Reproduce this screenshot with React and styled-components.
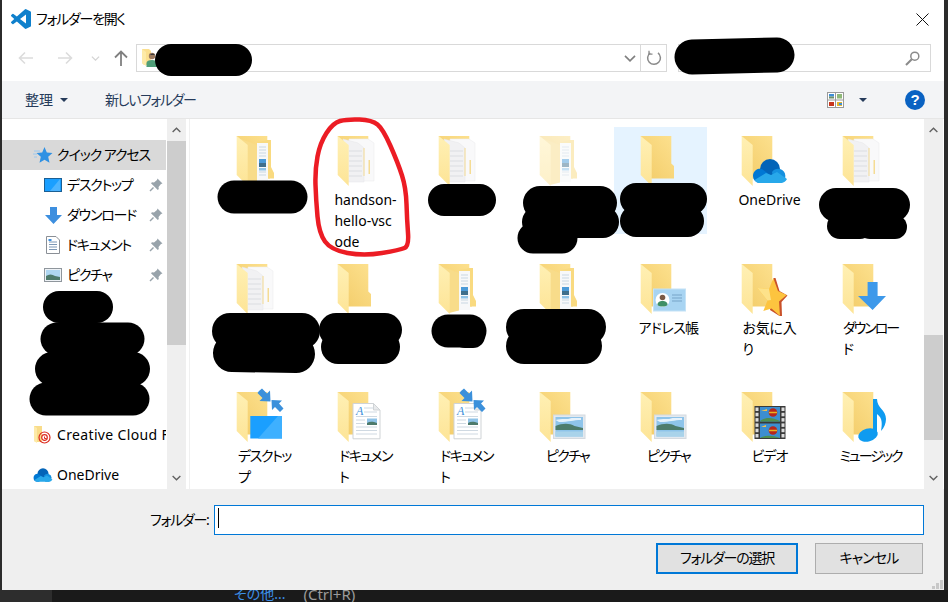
import React, { useId } from "react";
import styled, { createGlobalStyle } from "styled-components";

const Global = createGlobalStyle`
  html, body { margin: 0; padding: 0; background: #1a1a1a; overflow: hidden; }
  * { box-sizing: border-box; }
`;

const FONT = `"Noto Sans", "Noto Sans CJK JP", sans-serif`;

const Screen = styled.div`
  position: relative;
  width: 948px;
  height: 602px;
  display: flex;
  flex-direction: column;
  overflow: hidden;
  font-family: ${FONT};
  font-feature-settings: "palt";
  font-size: 14px;
  color: #000;
  background: #1a1a1a;
`;
const WindowRow = styled.div`
  display: flex;
  height: 590px;
  flex: none;
`;
const Edge = styled.div`
  flex: none;
  width: ${(p) => p.$w}px;
  background: #2b2b2b;
`;
const Dialog = styled.div`
  flex: 1;
  min-width: 0;
  display: flex;
  flex-direction: column;
  background: #fff;
`;
const TitleBar = styled.div`
  height: 38px;
  flex: none;
  display: flex;
  align-items: center;
  padding: 0 15px 0 9px;
  gap: 5px;
`;
const TitleText = styled.span`
  flex: 1;
  font-size: 14px;
  line-height: 20px;
  letter-spacing: -1.25px;
`;
const NavBar = styled.div`
  height: 43px;
  flex: none;
  display: flex;
  padding: 6px 13px 9px 0;
`;
const NavButtons = styled.div`
  width: 134px;
  flex: none;
  display: flex;
  align-items: center;
  padding-left: 16px;
`;
const AddressBox = styled.div`
  width: 531px;
  flex: none;
  display: flex;
  align-items: center;
  border: 1px solid #d9d9d9;
  padding-left: 5px;
`;
const AddressFill = styled.div`
  flex: 1;
`;
const AddressDivider = styled.div`
  width: 1px;
  height: 100%;
  background: #d9d9d9;
  margin: 0 5px 0 4px;
`;
const SearchBox = styled.div`
  flex: 1;
  margin-left: 11px;
  display: flex;
  align-items: center;
  justify-content: flex-end;
  border: 1px solid #d9d9d9;
  padding-right: 10px;
`;
const ToolBar = styled.div`
  height: 38px;
  flex: none;
  display: flex;
  align-items: center;
  background: #f3f4f6;
  border-bottom: 1px solid #e6e6e6;
  color: #263b5a;
  padding: 0 19px 0 23px;
`;
const ToolLabel = styled.span`
  font-size: 14px;
  line-height: 20px;
  letter-spacing: ${(p) => p.$spacing || 0}px;
`;
const ToolCaret = styled.span`
  width: 0;
  height: 0;
  margin-left: ${(p) => p.$ml}px;
  border-left: 4px solid transparent;
  border-right: 4px solid transparent;
  border-top: 4px solid #263b5a;
`;
const ToolSpacer = styled.div`
  flex: none;
  width: ${(p) => p.$w}px;
`;
const ToolFill = styled.div`
  flex: 1;
`;
const HelpBadge = styled.span`
  width: 20px;
  height: 20px;
  margin-left: 38px;
  border-radius: 50%;
  background: #0a62c2;
  color: #fff;
  font-family: "Liberation Sans", sans-serif;
  font-weight: 700;
  font-size: 15px;
  line-height: 20px;
  text-align: center;
`;
const Main = styled.div`
  height: 370px;
  flex: none;
  display: flex;
  overflow: hidden;
`;
const Sidebar = styled.div`
  width: 164px;
  flex: none;
  padding-top: 21px;
  margin-right: 1px;
  overflow: hidden;
`;
const NavRow = styled.div`
  height: 30px;
  display: flex;
  align-items: center;
  margin-bottom: ${(p) => p.$after || 0}px;
  padding-left: ${(p) => (p.$level ? 41 : 31)}px;
  padding-right: 3px;
  background: ${(p) => (p.$active ? "#d9d9d9" : "transparent")};
  white-space: nowrap;
`;
const NavIcon = styled.span`
  flex: none;
  width: 20px;
  height: 20px;
  margin-right: 4px;
  display: flex;
  align-items: center;
  justify-content: center;
`;
const NavLabel = styled.span`
  font-size: 14px;
  line-height: 20px;
  letter-spacing: ${(p) => p.$spacing}px;
`;
const Pin = styled.span`
  margin-left: auto;
  flex: none;
  display: flex;
`;
const ScrollBar = styled.div`
  width: 19px;
  flex: none;
  display: flex;
  flex-direction: column;
  background: #efefef;
`;
const ScrollButton = styled.div`
  height: 22px;
  flex: none;
  display: flex;
  align-items: center;
  justify-content: center;
`;
const ScrollSpace = styled.div`
  flex: ${(p) => (p.$fill ? 1 : "none")};
  height: ${(p) => (p.$fill ? "auto" : `${p.$h}px`)};
  background: ${(p) => (p.$thumb ? "#cdcdcd" : "transparent")};
`;
const Divider = styled.div`
  width: 4px;
  flex: none;
  border-right: 1px solid #f0f0f0;
`;
const Files = styled.div`
  flex: 1;
  min-width: 0;
  overflow: hidden;
  padding: 8px 0 0 20px;
  display: grid;
  grid-template-columns: repeat(7, 93px);
  grid-auto-rows: 128px;
  column-gap: 8px;
  align-items: start;
`;
const Tile = styled.div`
  display: flex;
  flex-direction: column;
  align-items: stretch;
  padding-top: 9px;
  height: ${(p) => (p.$selected ? "107px" : "125px")};
  background: ${(p) => (p.$selected ? "#e5f3ff" : "transparent")};
`;
const TileIcon = styled.svg`
  display: block;
  flex: none;
  width: 60px;
  height: 50px;
  margin-left: 26px;
  overflow: visible;
`;
const TileLabel = styled.div`
  align-self: center;
  margin: 3px 0 0 16px;
  font-size: 14px;
  line-height: 21px;
  white-space: pre;
  letter-spacing: ${(p) => p.$spacing || 0}px;
`;
const Footer = styled.div`
  position: relative;
  flex: 1;
  background: #efefef;
  padding: 16px 20px 0 148px;
  display: flex;
  flex-direction: column;
`;
const FieldRow = styled.div`
  display: flex;
  align-items: center;
`;
const FieldLabel = styled.label`
  font-size: 14px;
  line-height: 20px;
  margin-right: 5px;
  white-space: nowrap;
  letter-spacing: -1.25px;
`;
const Field = styled.div`
  flex: 1;
  height: 30px;
  border: 1px solid #0078d7;
  background: #fff;
  padding: 2px 3px;
`;
const Cursor = styled.div`
  width: 1px;
  height: 20px;
  background: #000;
`;
const ButtonRow = styled.div`
  display: flex;
  justify-content: flex-end;
  gap: 17px;
  margin-top: 8px;
  padding-right: 1px;
`;
const Button = styled.button`
  height: 31px;
  width: ${(p) => p.$w}px;
  padding: 0 0 3px;
  background: #e1e1e1;
  border: ${(p) => (p.$primary ? "2px solid #0078d7" : "1px solid #adadad")};
  font-family: ${FONT};
  font-feature-settings: "palt";
  font-size: 14px;
  letter-spacing: ${(p) => p.$spacing}px;
  color: #000;
`;
const Grip = styled.svg`
  position: absolute;
  right: 1px;
  bottom: 1px;
`;
const BottomBar = styled.div`
  height: 12px;
  flex: none;
  display: flex;
  overflow: hidden;
  background: #1a1a1a;
`;
const BottomLeft = styled.div`
  width: 52px;
  flex: none;
  background: #2d2d2d;
`;
const BottomText = styled.span`
  margin-top: -6px;
  font-size: ${(p) => p.$size}px;
  line-height: 20px;
  white-space: nowrap;
  margin-left: ${(p) => p.$ml}px;
  color: ${(p) => p.$color};
`;
const Overlay = styled.svg`
  position: absolute;
  left: 0;
  top: 0;
  width: 948px;
  height: 602px;
  pointer-events: none;
`;

/* ---------- marks drawn over the screenshot ---------- */
const BLOBS = [
  [171, 60, 236, 60, 32],
  [692, 57, 777, 55, 35],
  [59, 307, 97, 307, 32],
  [57, 339, 128, 339, 33],
  [52, 369, 133, 369, 34],
  [46, 399, 133, 399, 33],
  [234, 197, 291, 197, 33],
  [444, 200, 480, 200, 32],
  [540, 203, 600, 203, 34],
  [538, 222, 603, 222, 32],
  [533, 238, 562, 238, 31],
  [636, 199, 691, 199, 32],
  [636, 221, 688, 221, 32],
  [836, 205, 893, 205, 34],
  [840, 226, 860, 226, 26],
  [870, 227, 895, 227, 24],
  [230, 331, 302, 331, 36],
  [232, 353, 296, 354, 38],
  [336, 330, 385, 330, 34],
  [338, 347, 383, 347, 34],
  [448, 331, 470, 331, 33],
  [465, 336, 473, 336, 24],
  [524, 327, 588, 327, 36],
  [524, 346, 584, 346, 36],
];
const RING = [
  [347, 119], [372, 120], [383, 129], [398, 163], [406, 188], [407, 220], [409, 246],
  [400, 250], [364, 256], [331, 250], [319, 233], [316, 200], [315, 170], [320, 143],
  [333, 123],
];
const smoothClosed = (pts) => {
  const mid = (a, b) => [(a[0] + b[0]) / 2, (a[1] + b[1]) / 2];
  const start = mid(pts[pts.length - 1], pts[0]);
  let d = `M${start[0]} ${start[1]}`;
  pts.forEach((p, i) => {
    const m = mid(p, pts[(i + 1) % pts.length]);
    d += `Q${p[0]} ${p[1]} ${m[0]} ${m[1]}`;
  });
  return d + "Z";
};

/* ---------- small icons ---------- */
const Arrow = ({ dir, color }) => (
  <svg width="16" height="14" viewBox="0 0 16 14">
    <path
      d={dir === "left" ? "M15 7H1.5M7 1.5 1.5 7 7 12.5" : "M1 7h13.5M9 1.5 14.5 7 9 12.5"}
      fill="none"
      stroke={color}
      strokeWidth="1.6"
    />
  </svg>
);
const NavSlot = styled.span`
  display: flex;
  flex: none;
  margin-left: ${(p) => p.$ml || 0}px;
`;
const Chevron = ({ color, up, w = 10, h = 6, sw = 1.5 }) => (
  <svg width={w} height={h} viewBox="0 0 10 6">
    <path d={up ? "M.7 5.3 5 1l4.3 4.3" : "M.7.7 5 5 9.3.7"} fill="none" stroke={color} strokeWidth={sw} />
  </svg>
);
const VsCode = () => (
  <svg width="20" height="20" viewBox="0 0 24 24">
    <path
      fill="#0f80cc"
      d="M23.15 2.587L18.21.21a1.494 1.494 0 0 0-1.705.29l-9.46 8.63-4.12-3.128a.999.999 0 0 0-1.276.057L.327 7.261A1 1 0 0 0 .326 8.74L3.899 12 .326 15.26a1 1 0 0 0 .001 1.479L1.65 17.94a.999.999 0 0 0 1.276.057l4.12-3.128 9.46 8.63a1.492 1.492 0 0 0 1.704.29l4.942-2.377A1.5 1.5 0 0 0 24 20.06V3.939a1.5 1.5 0 0 0-.85-1.352zm-5.146 14.861L10.826 12l7.178-5.448v10.896z"
    />
  </svg>
);
const CloseX = () => (
  <svg width="13" height="13" viewBox="0 0 13 13">
    <path d="M.5.5l12 12M12.5.5l-12 12" stroke="#111" strokeWidth="1" fill="none" />
  </svg>
);
const UserFolder = () => (
  <svg width="18" height="22" viewBox="0 0 18 22">
    <path d="M0 2h7l2 2v14H2l-2-2z" fill="#fbdf8f" />
    <path d="M0 2l4 3v14l-4-3z" fill="#fdeaa8" />
    <circle cx="10" cy="9" r="3.2" fill="#9c7a5e" />
    <path d="M9 7a3 3 0 0 1 4 1H8z" fill="#3a3a3a" />
    <path d="M4.500 20v-4c0-2 2.500-3 5.500-3s5 1 5 3v4z" fill="#4f9e78" />
  </svg>
);
const Refresh = () => (
  <svg width="16" height="16" viewBox="0 0 16 16">
    <path d="M4.200 2.800A6.400 6.400 0 1 0 12 2.900" fill="none" stroke="#8a8a8a" strokeWidth="1.500" />
    <path d="M3 .7v3.500h3.500" fill="none" stroke="#8a8a8a" strokeWidth="1.300" />
  </svg>
);
const Magnifier = () => (
  <svg width="15" height="15" viewBox="0 0 15 15">
    <circle cx="9.800" cy="5.200" r="4" fill="none" stroke="#8a8a8a" strokeWidth="1.500" />
    <path d="M6.800 8.200 1 14" stroke="#8a8a8a" strokeWidth="2" />
  </svg>
);
const ViewIcon = () => (
  <svg width="17" height="16" viewBox="0 0 17 16">
    <rect x=".5" y=".5" width="16" height="15" fill="#fff" stroke="#9a9a9a" />
    <path d="M8.500 0v16M0 8h17" stroke="#9a9a9a" />
    <rect x="2" y="2" width="5" height="2.500" fill="#3f8ed8" />
    <rect x="2" y="4.500" width="5" height="2" fill="#6f8f6a" />
    <rect x="10" y="2" width="5" height="4.500" fill="#8fb878" />
    <rect x="2" y="10" width="5" height="4" fill="#c8351c" />
    <rect x="10" y="10" width="5" height="4" fill="#e3b52a" />
    <rect x="12" y="11" width="3" height="2" fill="#3f8ed8" />
  </svg>
);
const PinIcon = () => (
  <svg width="14" height="14" viewBox="0 0 14 14">
    <path d="M8.500.5 13.500 5.500 12 6 9.500 9 9.800 11 8.800 12 2 5.200 3 4.200 5 4.500 8 2z" fill="#98a3ab" />
    <path d="M4.500 9.500 1 13" stroke="#98a3ab" strokeWidth="1.400" />
  </svg>
);
const SideStar = () => (
  <svg width="20" height="18" viewBox="0 0 20 18">
    <path d="M11.500 1l2.300 5.500 5.700.5-4.300 3.800 1.300 6-5-3-5 3 1.300-6L3.500 7l5.700-.5z" fill="#2f91e3" />
    <path d="M1 5h6M0 8h4M1 11h3" stroke="#9cc8ee" strokeWidth="1" />
  </svg>
);
const SideDesktop = () => (
  <svg width="18" height="14" viewBox="0 0 18 14">
    <rect x=".5" y=".5" width="17" height="13" fill="#1a9fff" stroke="#1b5f94" />
    <path d="M6 13 16 1v12z" fill="#4cb4ff" />
  </svg>
);
const SideDown = () => (
  <svg width="17" height="17" viewBox="0 0 17 17">
    <path d="M5 0h7v8h5l-8.500 9L0 8h5z" fill="#3d8fdf" />
  </svg>
);
const SideDoc = () => (
  <svg width="14" height="18" viewBox="0 0 14 18">
    <path d="M.5.500H10L13.500 4V17.500H.5z" fill="#fff" stroke="#8a8f96" />
    <path d="M3 6h8M3 8.500h8M3 11h8M3 13.500h8" stroke="#7c97b5" />
    <rect x="2.500" y="3" width="3" height="2" fill="#3d8fdf" />
  </svg>
);
const SidePic = () => (
  <svg width="18" height="14" viewBox="0 0 18 14">
    <rect x=".5" y=".5" width="17" height="13" fill="#eef2f6" stroke="#8f969c" />
    <rect x="2" y="2" width="14" height="10" fill="#aed6f1" />
    <path d="M2 8c3-2 6-2 9 0l5 1v3H2z" fill="#4d7a6b" />
  </svg>
);
const Cloud = ({ x = 0, y = 0, s = 1 }) => (
  <g transform={`translate(${x} ${y}) scale(${s})`}>
    <circle cx="18" cy="10" r="10" fill="#0364b8" />
    <path d="M1 17a7 7 0 0 1 9-7l8 6-7 8H8a7 7 0 0 1-7-7z" fill="#0078d4" />
    <path d="M20 13a8 8 0 0 1 8-3 7.500 7.500 0 0 1 1 14H22z" fill="#1490df" />
    <path d="M6.500 24h22a7.500 7.500 0 0 0 6.500-4L25 13l-6 3-5-2L2.500 21a7 7 0 0 0 4 3z" fill="#28a8ea" />
  </g>
);
const SideCloud = () => (
  <svg width="20" height="14" viewBox="0 0 36 24"><Cloud /></svg>
);
const SideCC = () => (
  <svg width="18" height="18" viewBox="0 0 18 18">
    <path d="M0 0h8v16H2l-2-1z" fill="#f9dc8a" />
    <path d="M0 0l3 2v15l-3-2z" fill="#fdeaa8" />
    <circle cx="10.500" cy="11.500" r="5.500" fill="none" stroke="#dc2b20" strokeWidth="1.200" />
    <circle cx="10.500" cy="11.500" r="2.800" fill="none" stroke="#dc2b20" strokeWidth="1.200" />
    <path d="M10.500 10.500v2h2" stroke="#dc2b20" fill="none" />
  </svg>
);

/* ---------- large folder icons ---------- */
const Arrows = () => (
  <g fill="#3b90db">
    <path d="M23 -1 26 -3.500 31 1.500 34 -1.500 34.500 9.500 23.500 9 26.500 6 21.500 1z" />
    <path d="M35.500 8 46 8.500 43 11.500 47.500 16.500 44 20 39 15 36 18z" />
  </g>
);
const DocPage = () => (
  <g>
    <path d="M16 11.500H36.500L43 18V46.800H16z" fill="#fff" stroke="#cfd3d6" />
    <path d="M36.500 11.500V18H43z" fill="#e8eaec" stroke="#cfd3d6" />
    <text x="19" y="23" fontFamily="'Liberation Serif', serif" fontStyle="italic" fontSize="12" fill="#3d8fd9">A</text>
    <path d="M19 24.500H40M19 28H28M19 31.500H28M19 35H40M19 38.500H40M19 42H40" stroke="#cfd9e2" strokeWidth="1" />
    <path d="M27 16H36M27 20H40" stroke="#cfd9e2" strokeWidth="1" />
    <rect x="30" y="26.500" width="10" height="6.500" fill="#8fc3e8" />
    <path d="M30 31c3-2 6-1.500 10 0v2H30z" fill="#4d7a6b" />
  </g>
);
const Scene = ({ x, y, w, h }) => (
  <g>
    <rect x={x} y={y} width={w} height={h} fill="#e3e9ef" stroke="#d4dae0" />
    <rect x={x + 2} y={y + 2} width={w - 4} height={h - 4} fill="#8ec4ea" />
    <path d={`M${x + 2} ${y + 5}c6-2 12 0 16-2h${w - 22}v2c-8 0-12 2-22 2z`} fill="#e6f2fb" />
    <path d={`M${x + 2} ${y + 11}c7-3 14-3 19 0l${w - 23} 2v2H${x + 2}z`} fill="#4d7c6c" />
    <rect x={x + 2} y={y + h - 7} width={w - 4} height="5" fill="#a9d3ea" />
  </g>
);
const Film = () => (
  <g>
    <rect x="13.500" y="14" width="31" height="33" fill="#3a3a3a" />
    {[0, 1, 2, 3, 4, 5].map((i) => (
      <g key={i} fill="#dcdcdc">
        <rect x="14.500" y={15.500 + i * 5.300} width="3" height="3.500" />
        <rect x="40.500" y={15.500 + i * 5.300} width="3" height="3.500" />
      </g>
    ))}
    <rect x="19" y="15" width="20" height="14.500" fill="#3c8ed0" />
    <rect x="19" y="31.500" width="20" height="14.500" fill="#3c8ed0" />
    <path d="M19 29c5-4 12-4 20 0v.5H19z" fill="#4f8f4f" />
    <circle cx="32" cy="20.500" r="4.300" fill="#b7261c" />
    <path d="M28 20.500h8" stroke="#e8b320" strokeWidth="1.500" />
    <circle cx="32" cy="38.500" r="4.300" fill="#b7261c" />
    <path d="M28 38.500h8" stroke="#e8b320" strokeWidth="1.500" />
    <path d="M20 19l6-2v2zM20 35l5-2v2z" fill="#f2c14e" />
    <path d="M19 46c5-3 12-3 20 0z" fill="#4f8f4f" />
  </g>
);
const FolderIcon = ({ kind }) => {
  const id = useId();
  const faded = kind === "photosFaded";
  const body = faded ? "photos" : kind;
  return (
    <TileIcon viewBox="0 0 60 50" style={faded ? { opacity: 0.5 } : undefined}>
      <defs>
        <linearGradient id={`${id}b`} x1="0" y1="1" x2="1" y2="0">
          <stop offset="0" stopColor="#f2cb67" />
          <stop offset="1" stopColor="#fde18f" />
        </linearGradient>
        <linearGradient id={`${id}f`} x1="0" y1="0" x2="0" y2="1">
          <stop offset="0" stopColor="#fff0b4" />
          <stop offset="1" stopColor="#fde496" />
        </linearGradient>
      </defs>
      <path d="M.7 0H31.300V27.500L34 30V42.500H11z" fill={`url(#${id}b)`} />
      {body === "photos" && (
        <g>
          <path d="M31 4H35V31L38 37V42.500H22V6z" fill="#f9da80" />
          <path d="M5 3 21 9V46.500L11 49z" fill="#f8dc8a" />
          <path d="M21 7H32V46H21z" fill="#f7f8f9" />
          <path d="M23 11h7M23 14h7M23 17h7M23 20h7M23 36h7M23 39h7" stroke="#c9d7e2" strokeWidth="1" />
          <rect x="23" y="23" width="7" height="4" fill="#4a9ad8" />
          <rect x="23" y="27" width="7" height="4" fill="#3f6f8c" />
          <rect x="23" y="32" width="7" height="2.500" fill="#8fc3e8" />
        </g>
      )}
      {body === "docs" && (
        <g>
          <path d="M12 3H31L37 7V45H12z" fill="#f9f9fa" stroke="#ececee" strokeWidth=".6" />
          <path d="M31.500 24H33V38H31.500z" fill="#f5dc94" />
          <path d="M6 3 21 7 27 12V46H11z" fill="#f1f1f3" stroke="#e6e6e8" strokeWidth=".5" />
          <path d="M12 15h13M12 20h13M12 25h13M12 30h13M12 35h13M12 40h13" stroke="#e6e7ea" strokeWidth="2" />
          <path d="M27 12V40" stroke="#f5dc94" strokeWidth="1" />
        </g>
      )}
      <path d="M.7 0 11.700 9V50L.7 39z" fill={`url(#${id}f)`} />
      {body === "onedrive" && <Cloud x={11} y={23} />}
      {body === "contacts" && (
        <g>
          <rect x="13.500" y="25" width="32" height="22" fill="#a8d4f2" stroke="#c4e2f6" />
          <circle cx="22.500" cy="36" r="7" fill="#fff" />
          <circle cx="22.500" cy="33.500" r="2.800" fill="#7a5a46" />
          <path d="M17.500 41c0-3 2-4 5-4s5 1 5 4c-2 2-8 2-10 0z" fill="#3f8f66" />
          <path d="M32 31h10M32 34h10M32 37h10" stroke="#86b4d6" strokeWidth="1.400" />
        </g>
      )}
      {body === "star" && (
        <g>
          <path d="M32.500 14 34.500 14 38.500 27 46.500 31.500 40.500 38 41 52 38.500 52 29 46z" fill="#c9512a" />
          <path d="M32.300 14 37 27 45.700 31 38 37.500 39 52 30.500 44.500 22.300 47 26.500 36.500 16.300 24 28 25z" fill="#fdc43f" />
          <path d="M16.300 24 28 25 30 36 26.500 36.500z" fill="#fde28a" />
        </g>
      )}
      {body === "download" && (
        <path d="M25.600 18H35.600V32H44L30.600 46 16 32H25.600z" fill="#3e99ea" />
      )}
      {body === "desktop" && (
        <g>
          <Arrows />
          <rect x="14.300" y="24" width="31.700" height="22.500" fill="#1a9fff" />
          <path d="M22 46.500 42 24H46V46.500z" fill="#3eb0ff" />
        </g>
      )}
      {body === "doc" && <DocPage />}
      {body === "docArrows" && (
        <g>
          <DocPage />
          <Arrows />
        </g>
      )}
      {body === "picture" && <Scene x={14.500} y={23} w={31.500} h={23.500} />}
      {body === "video" && <Film />}
      {body === "music" && (
        <g fill="#0e9bf0">
          <ellipse cx="26" cy="43" rx="10" ry="6.500" transform="rotate(-15 26 43)" />
          <path d="M31 7H35C35 16 44 18 44 27 44 31 42 36 39 39 40 33 41 26 35 22V44H31z" />
        </g>
      )}
    </TileIcon>
  );
};

const TILES = [
  { kind: "photos" },
  { kind: "docs", label: "handson-\nhello-vsc\node" },
  { kind: "docs" },
  { kind: "photosFaded" },
  { kind: "plain", selected: true },
  { kind: "onedrive", label: "OneDrive" },
  { kind: "docs" },
  { kind: "docs" },
  { kind: "plain" },
  { kind: "photos" },
  { kind: "photos" },
  { kind: "contacts", label: "アドレス帳", spacing: -0.6 },
  { kind: "star", label: "お気に入\nり", spacing: -0.2 },
  { kind: "download", label: "ダウンロー\nド", spacing: -2 },
  { kind: "desktop", label: "デスクトッ\nプ", spacing: -1.4 },
  { kind: "doc", label: "ドキュメン\nト", spacing: -1.6 },
  { kind: "docArrows", label: "ドキュメン\nト", spacing: -1.6 },
  { kind: "picture", label: "ピクチャ", spacing: -1.6 },
  { kind: "picture", label: "ピクチャ", spacing: -1.6 },
  { kind: "video", label: "ビデオ", spacing: -1 },
  { kind: "music", label: "ミュージック", spacing: -2 },
];

const SIDE = [
  { icon: <SideStar />, label: "クイック アクセス", active: true, spacing: -1.1 },
  { icon: <SideDesktop />, label: "デスクトップ", level: 1, pin: true, spacing: -1.25 },
  { icon: <SideDown />, label: "ダウンロード", level: 1, pin: true, spacing: -1.25 },
  { icon: <SideDoc />, label: "ドキュメント", level: 1, pin: true, spacing: -1.25 },
  { icon: <SidePic />, label: "ピクチャ", level: 1, pin: true, after: 130, spacing: -1.25 },
  { icon: <SideCC />, label: "Creative Cloud Files", after: 10, spacing: 0.35 },
  { icon: <SideCloud />, label: "OneDrive", spacing: 0 },
];

const Scroll = ({ before, thumb }) => (
  <ScrollBar>
    <ScrollButton><Chevron up color="#606060" w={9} h={6} /></ScrollButton>
    <ScrollSpace $h={before} />
    <ScrollSpace $h={thumb} $thumb />
    <ScrollSpace $fill />
    <ScrollButton><Chevron color="#606060" w={9} h={6} /></ScrollButton>
  </ScrollBar>
);

export default function App() {
  return (
    <Screen>
      <Global />
      <WindowRow>
        <Edge $w={2} />
        <Dialog>
          <TitleBar>
            <VsCode />
            <TitleText>フォルダーを開く</TitleText>
            <CloseX />
          </TitleBar>
          <NavBar>
            <NavButtons>
              <Arrow dir="left" color="#dcdcdc" />
              <NavSlot $ml={23}><Arrow dir="right" color="#dcdcdc" /></NavSlot>
              <NavSlot $ml={18}><Chevron color="#d4d4d4" w={9} h={5} /></NavSlot>
              <NavSlot $ml={14}>
                <svg width="14" height="16" viewBox="0 0 14 16">
                  <path d="M7 16V1.500M1 7.500 7 1.500l6 6" fill="none" stroke="#808080" strokeWidth="1.800" />
                </svg>
              </NavSlot>
            </NavButtons>
            <AddressBox>
              <UserFolder />
              <AddressFill />
              <Chevron color="#808080" w={12} h={7} sw={1.4} />
              <AddressDivider />
              <Refresh />
              <NavSlot $ml={4} />
            </AddressBox>
            <SearchBox><Magnifier /></SearchBox>
          </NavBar>
          <ToolBar>
            <ToolLabel>整理</ToolLabel>
            <ToolCaret $ml={7} />
            <ToolSpacer $w={37} />
            <ToolLabel $spacing={-1.35}>新しいフォルダー</ToolLabel>
            <ToolFill />
            <ViewIcon />
            <ToolCaret $ml={15} />
            <HelpBadge>?</HelpBadge>
          </ToolBar>
          <Main>
            <Sidebar>
              {SIDE.map((s) => (
                <NavRow key={s.label} $level={s.level} $active={s.active} $after={s.after}>
                  <NavIcon>{s.icon}</NavIcon>
                  <NavLabel $spacing={s.spacing}>{s.label}</NavLabel>
                  {s.pin && <Pin><PinIcon /></Pin>}
                </NavRow>
              ))}
            </Sidebar>
            <Scroll before={0} thumb={204} />
            <Divider />
            <Files>
              {TILES.map((t, i) => (
                <Tile key={i} $selected={t.selected}>
                  <FolderIcon kind={t.kind} />
                  {t.label && <TileLabel $spacing={t.spacing}>{t.label}</TileLabel>}
                </Tile>
              ))}
            </Files>
            <Scroll before={194} thumb={105} />
            <ToolSpacer $w={1} />
          </Main>
          <Footer>
            <FieldRow>
              <FieldLabel>フォルダー:</FieldLabel>
              <Field><Cursor /></Field>
            </FieldRow>
            <ButtonRow>
              <Button $primary $w={142} $spacing={-1.25}>フォルダーの選択</Button>
              <Button $w={108} $spacing={-0.9}>キャンセル</Button>
            </ButtonRow>
            <Grip width="12" height="9" viewBox="0 0 12 9">
              <g fill="#c8c8c8">
                <rect x="9" y="0" width="3" height="3" />
                <rect x="5" y="3" width="3" height="3" />
                <rect x="9" y="3" width="3" height="3" />
                <rect x="1" y="6" width="3" height="3" />
                <rect x="5" y="6" width="3" height="3" />
                <rect x="9" y="6" width="3" height="3" />
              </g>
            </Grip>
          </Footer>
        </Dialog>
        <Edge $w={4} />
      </WindowRow>
      <BottomBar>
        <BottomLeft />
        <BottomText $ml={182} $size={14} $color="#3c8fe8">その他...</BottomText>
        <BottomText $ml={18} $size={15} $color="#9a9a9a">(Ctrl+R)</BottomText>
      </BottomBar>
      <Overlay viewBox="0 0 948 602">
        {BLOBS.map(([x1, y1, x2, y2, w], i) => (
          <line key={i} x1={x1} y1={y1} x2={x2} y2={y2} stroke="#000" strokeWidth={w} strokeLinecap="round" />
        ))}
        <path d={smoothClosed(RING)} fill="none" stroke="#ec1c24" strokeWidth="4.500" />
      </Overlay>
    </Screen>
  );
}
